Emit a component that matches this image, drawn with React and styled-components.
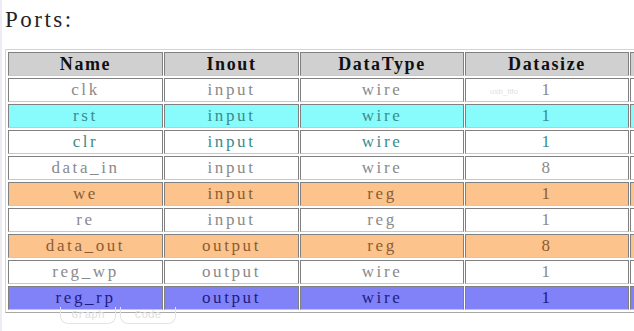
import React from 'react'
import styled, { createGlobalStyle } from 'styled-components'

const GlobalStyle = createGlobalStyle`
	html, body {
		margin: 0;
		padding: 0;
		background: #ffffff;
		overflow: hidden;
	}
	body {
		font-family: 'Liberation Serif', 'DejaVu Serif', serif;
	}
`

const Page = styled.div`
	position: relative;
	width: 634px;
	height: 331px;
	padding: 7px 0 0 5px;
	box-sizing: border-box;
	border-left: 2px solid #ececf2;
	overflow: hidden;
`

const Title = styled.h2`
	margin: 0 0 0 -2px;
	font-family: 'Liberation Serif', serif;
	font-weight: normal;
	font-size: 23px;
	line-height: 26px;
	color: #222222;
	letter-spacing: 2.5px;
`

const Ports = styled.table`
	margin-top: 16px;
	margin-left: -2px;
	border: 1px solid;
	border-color: #d4d4d4 #a8a8a8 #a8a8a8 #d4d4d4;
	border-collapse: separate;
	border-spacing: 1px 2px;
	padding: 0 1px;
	table-layout: fixed;
	width: 760px;
`

const Head = styled.th`
	height: 22px;
	padding: 0;
	background: #d0d0d0;
	border: 1px solid;
	border-color: #808080 #808080 #c8c8c8 #808080;
	font-family: 'Liberation Serif', serif;
	font-weight: bold;
	font-size: 18px;
	letter-spacing: 1.6px;
	color: #101010;
	text-align: center;
`

const Cell = styled.td`
	height: 22px;
	padding: 0;
	border: 1px solid;
	border-color: #808080 #808080 #c8c8c8 #808080;
	background: ${p => p.$bg};
	color: ${p => p.$fg};
	font-family: 'Liberation Serif', serif;
	font-size: 17px;
	letter-spacing: 2.6px;
	text-align: center;
	white-space: nowrap;
`

const Tabs = styled.div`
	display: flex;
	gap: 4px;
	margin: -6px 0 0 53px;
`

const GhostTab = styled.span`
	width: 54px;
	height: 16px;
	border: 1px solid #e4e4e4;
	border-top: none;
	border-radius: 0 0 8px 8px;
	font-family: 'Liberation Mono', monospace;
	font-size: 11px;
	line-height: 16px;
	color: #dedede;
	text-align: center;
`

const Ghost = styled.span`
	position: absolute;
	left: 488px;
	top: 87px;
	font-family: 'Liberation Sans', sans-serif;
	font-size: 8px;
	color: #e2e2e2;
`

const themes = {
	plain: { bg: '#ffffff', fg: '#8a8a8a' },
	teal: { bg: '#ffffff', fg: '#3a8c8c' },
	cyan: { bg: '#88fcfc', fg: '#3a8c8c' },
	orange: { bg: '#fcc48c', fg: '#8a5c34' },
	blue: { bg: '#8282f8', fg: '#1c1c84' },
}

const rows = [
	['clk', 'input', 'wire', '1', 'plain'],
	['rst', 'input', 'wire', '1', 'cyan'],
	['clr', 'input', 'wire', '1', 'teal'],
	['data_in', 'input', 'wire', '8', 'plain'],
	['we', 'input', 'reg', '1', 'orange'],
	['re', 'input', 'reg', '1', 'plain'],
	['data_out', 'output', 'reg', '8', 'orange'],
	['reg_wp', 'output', 'wire', '1', 'plain'],
	['reg_rp', 'output', 'wire', '1', 'blue'],
]

export default function App() {
	return (
		<>
			<GlobalStyle />
			<Page>
				<Title>Ports:</Title>
				<Ports>
					<colgroup>
						<col style={{ width: 155 }} />
						<col style={{ width: 135 }} />
						<col style={{ width: 164 }} />
						<col style={{ width: 164 }} />
						<col />
					</colgroup>
					<thead>
						<tr>
							<Head>Name</Head>
							<Head>Inout</Head>
							<Head>DataType</Head>
							<Head>Datasize</Head>
							<Head />
						</tr>
					</thead>
					<tbody>
						{rows.map(([name, inout, type, size, kind]) => {
							const t = themes[kind]
							return (
								<tr key={name}>
									<Cell $bg={t.bg} $fg={t.fg}>{name}</Cell>
									<Cell $bg={t.bg} $fg={t.fg}>{inout}</Cell>
									<Cell $bg={t.bg} $fg={t.fg}>{type}</Cell>
									<Cell $bg={t.bg} $fg={t.fg}>{size}</Cell>
									<Cell $bg={t.bg} $fg={t.fg} />
								</tr>
							)
						})}
					</tbody>
				</Ports>
				<Tabs>
					<GhostTab>Graph</GhostTab>
					<GhostTab>Code</GhostTab>
				</Tabs>
				<Ghost>usb_fifo</Ghost>
			</Page>
		</>
	)
}
